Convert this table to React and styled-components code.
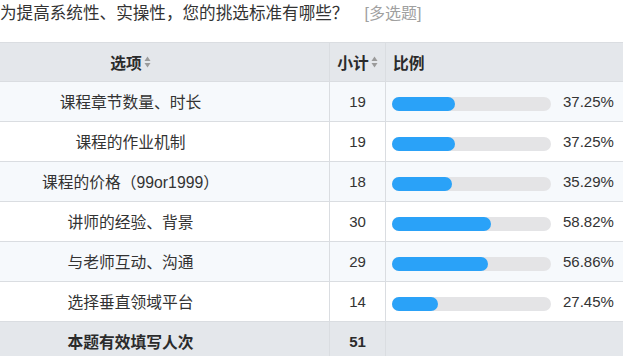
import React from "react";
import styled, { createGlobalStyle } from "styled-components";

const Global = createGlobalStyle`
  html, body { margin: 0; padding: 0; background: #fff; }
  body {
    font-family: "Liberation Sans", "Noto Sans CJK SC", sans-serif;
    color: #333;
    width: 623px;
    overflow: hidden;
  }
`;

const Page = styled.div`
  width: 623px;
  overflow: hidden;
`;

const Title = styled.div`
  display: flex;
  align-items: center;
  height: 24px;
  margin-bottom: 18px;
  font-size: 16.6px;
  color: #333;
  white-space: nowrap;
`;

const Tag = styled.span`
  color: #a0a0a0;
  margin-left: 16px;
  font-size: 16px;
`;

const Table = styled.div`
  border-top: 1px solid #dadde1;
  width: 100%;
`;

const Row = styled.div`
  display: grid;
  grid-template-columns: 330px 56px 1fr;
  height: ${(p) => (p.$head ? 39 : 40)}px;
  box-sizing: border-box;
  border-bottom: 1px solid #dadde1;
  background: ${(p) => p.$bg};
  font-weight: ${(p) => (p.$bold ? 700 : 400)};
  color: ${(p) => (p.$bold ? "#2b2b2b" : "#333")};
`;

const Cell = styled.div`
  display: flex;
  align-items: center;
  justify-content: ${(p) => p.$justify || "center"};
  box-sizing: border-box;
  border-right: ${(p) => (p.$last ? "none" : "1px solid #dadde1")};
  padding: ${(p) => p.$pad || "0"};
  font-size: ${(p) => p.$size || "15px"};
  white-space: nowrap;
  min-width: 0;
`;

const Sort = styled.svg`
  margin-left: 2px;
  flex: none;
`;

const Track = styled.div`
  width: 159px;
  height: 14px;
  border-radius: 7px;
  background: #e4e4e6;
  margin-top: 5px;
  flex: none;
  overflow: visible;
  position: relative;
`;

const Fill = styled.div`
  height: 14px;
  border-radius: 7px;
  background: #2aa2f8;
`;

const Pct = styled.span`
  margin-left: 12px;
  font-size: 15px;
`;

const SortIcon = () => (
  <Sort width="7" height="12" viewBox="0 0 7 12">
    <path d="M3.5 0.5 L6.5 5 L0.5 5 Z" fill="#9a9a9a" />
    <path d="M3.5 11.5 L6.5 7 L0.5 7 Z" fill="#9a9a9a" />
  </Sort>
);

const data = [
  ["课程章节数量、时长", 19, 37.25],
  ["课程的作业机制", 19, 37.25],
  ["课程的价格（99or1999）", 18, 35.29],
  ["讲师的经验、背景", 30, 58.82],
  ["与老师互动、沟通", 29, 56.86],
  ["选择垂直领域平台", 14, 27.45],
];

export default function App() {
  return (
    <Page>
      <Global />
      <Title>
        为提高系统性、实操性，您的挑选标准有哪些？<Tag>[多选题]</Tag>
      </Title>
      <Table>
        <Row $head $bg="#e4e7eb" $bold>
          <Cell $pad="0 68px 0 0" $size="15.75px">
            选项
            <SortIcon />
          </Cell>
          <Cell $size="15.75px">
            小计
            <SortIcon />
          </Cell>
          <Cell $last $justify="flex-start" $pad="0 0 0 7px" $size="15.75px">
            比例
          </Cell>
        </Row>
        {data.map(([label, n, pct], i) => (
          <Row key={label} $bg={i % 2 === 0 ? "#f6f9fc" : "#ffffff"}>
            <Cell $pad="0 68px 0 0" $size="15.75px">
              {label}
            </Cell>
            <Cell>{n}</Cell>
            <Cell $last $justify="flex-start" $pad="0 0 0 6px">
              <Track>
                <Fill style={{ width: `${pct * 1.69}px` }} />
              </Track>
              <Pct>{pct.toFixed(2)}%</Pct>
            </Cell>
          </Row>
        ))}
        <Row $bg="#e4e7eb" $bold>
          <Cell $pad="0 68px 0 0" $size="15.75px">
            本题有效填写人次
          </Cell>
          <Cell>51</Cell>
          <Cell $last />
        </Row>
      </Table>
    </Page>
  );
}
